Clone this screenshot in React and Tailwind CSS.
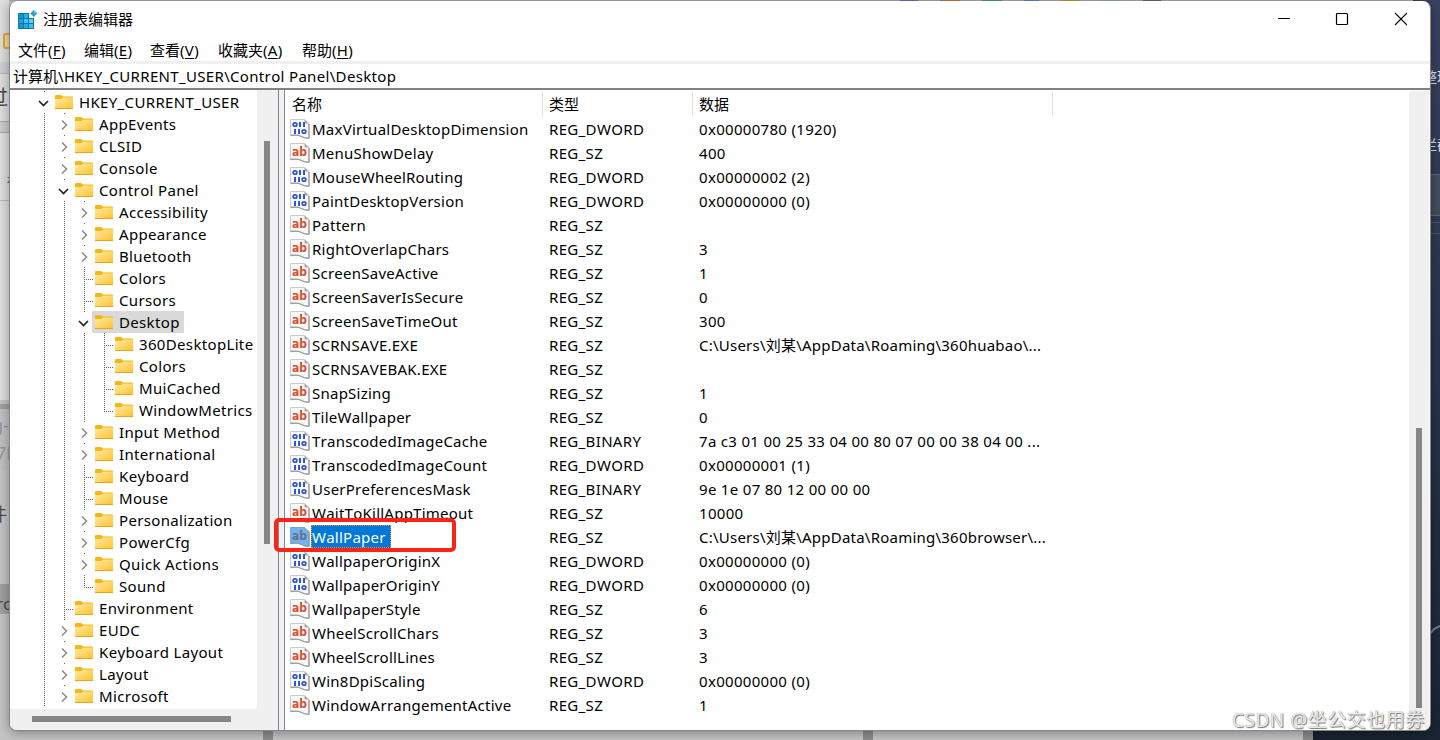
import React from 'react';

const MENU = [
  { label: '文件', hotkey: 'F', width: 'w-[66px]' },
  { label: '编辑', hotkey: 'E', width: 'w-[66px]' },
  { label: '查看', hotkey: 'V', width: 'w-[68px]' },
  { label: '收藏夹', hotkey: 'A', width: 'w-[84px]' },
  { label: '帮助', hotkey: 'H', width: 'w-[66px]' },
];

// cells: one letter per indent column
// '|' guide line, '>' collapsed, 'v' expanded, '+' leaf branch, 'L' last leaf
const TREE = [
  { cells: 'v', name: 'HKEY_CURRENT_USER' },
  { cells: '|>', name: 'AppEvents' },
  { cells: '|>', name: 'CLSID' },
  { cells: '|>', name: 'Console' },
  { cells: '|v', name: 'Control Panel' },
  { cells: '||>', name: 'Accessibility' },
  { cells: '||>', name: 'Appearance' },
  { cells: '||>', name: 'Bluetooth' },
  { cells: '||+', name: 'Colors' },
  { cells: '||+', name: 'Cursors' },
  { cells: '||v', name: 'Desktop', selected: true },
  { cells: '|||+', name: '360DesktopLite' },
  { cells: '|||+', name: 'Colors' },
  { cells: '|||+', name: 'MuiCached' },
  { cells: '|||L', name: 'WindowMetrics' },
  { cells: '||>', name: 'Input Method' },
  { cells: '||>', name: 'International' },
  { cells: '||+', name: 'Keyboard' },
  { cells: '||+', name: 'Mouse' },
  { cells: '||>', name: 'Personalization' },
  { cells: '||>', name: 'PowerCfg' },
  { cells: '||>', name: 'Quick Actions' },
  { cells: '||L', name: 'Sound' },
  { cells: '|+', name: 'Environment' },
  { cells: '|>', name: 'EUDC' },
  { cells: '|>', name: 'Keyboard Layout' },
  { cells: '|>', name: 'Layout' },
  { cells: '|>', name: 'Microsoft' },
];

const VALUES = [
  ['MaxVirtualDesktopDimension', 'REG_DWORD', '0x00000780 (1920)'],
  ['MenuShowDelay', 'REG_SZ', '400'],
  ['MouseWheelRouting', 'REG_DWORD', '0x00000002 (2)'],
  ['PaintDesktopVersion', 'REG_DWORD', '0x00000000 (0)'],
  ['Pattern', 'REG_SZ', ''],
  ['RightOverlapChars', 'REG_SZ', '3'],
  ['ScreenSaveActive', 'REG_SZ', '1'],
  ['ScreenSaverIsSecure', 'REG_SZ', '0'],
  ['ScreenSaveTimeOut', 'REG_SZ', '300'],
  ['SCRNSAVE.EXE', 'REG_SZ', 'C:\\Users\\刘某\\AppData\\Roaming\\360huabao\\...'],
  ['SCRNSAVEBAK.EXE', 'REG_SZ', ''],
  ['SnapSizing', 'REG_SZ', '1'],
  ['TileWallpaper', 'REG_SZ', '0'],
  ['TranscodedImageCache', 'REG_BINARY', '7a c3 01 00 25 33 04 00 80 07 00 00 38 04 00 ...'],
  ['TranscodedImageCount', 'REG_DWORD', '0x00000001 (1)'],
  ['UserPreferencesMask', 'REG_BINARY', '9e 1e 07 80 12 00 00 00'],
  ['WaitToKillAppTimeout', 'REG_SZ', '10000'],
  ['WallPaper', 'REG_SZ', 'C:\\Users\\刘某\\AppData\\Roaming\\360browser\\...'],
  ['WallpaperOriginX', 'REG_DWORD', '0x00000000 (0)'],
  ['WallpaperOriginY', 'REG_DWORD', '0x00000000 (0)'],
  ['WallpaperStyle', 'REG_SZ', '6'],
  ['WheelScrollChars', 'REG_SZ', '3'],
  ['WheelScrollLines', 'REG_SZ', '3'],
  ['Win8DpiScaling', 'REG_DWORD', '0x00000000 (0)'],
  ['WindowArrangementActive', 'REG_SZ', '1'],
];

const SELECTED = 'WallPaper';

const RegeditIcon = () => (
  <svg width="20" height="20" viewBox="0 0 20 20">
    <path d="M0 3h11v5h5v11H0z" fill="#0c79b0" />
    <g fill="#1593cc">
      <rect x="1" y="4" width="4" height="4" />
      <rect x="6" y="4" width="4" height="4" fill="#2fb0e2" />
      <rect x="1" y="9" width="4" height="4" fill="#1fa3d9" />
      <rect x="6" y="9" width="4" height="4" fill="#46c3ef" />
      <rect x="11" y="9" width="4" height="4" fill="#5ccdf3" />
      <rect x="1" y="14" width="4" height="4" />
      <rect x="6" y="14" width="4" height="4" fill="#2aa9de" />
      <rect x="11" y="14" width="4" height="4" fill="#3fbbe9" />
    </g>
    <path d="M15.6 0l3.6 3.3-3.3 3.6-3.6-3.3z" fill="#2d9bc8" />
    <path d="M15.6 0l3.6 3.3-3.4.3z" fill="#5cc0e2" />
  </svg>
);

const FolderIcon = () => (
  <svg width="18" height="14" viewBox="0 0 18 14" className="shrink-0">
    <defs>
      <linearGradient id="folder" x1="0" y1="0" x2="1" y2="1">
        <stop offset="0" stopColor="#ffeaa8" />
        <stop offset="1" stopColor="#fdc52f" />
      </linearGradient>
    </defs>
    <path d="M0 1a1 1 0 0 1 1-1h5l2 1.6H17a1 1 0 0 1 1 1V6H0z" fill="#f8b616" />
    <path d="M0 4h6.5L8 2.5h10V13H0z" fill="url(#folder)" />
    <path d="M0 13h18v1H0z" fill="#e9a51c" />
  </svg>
);

const TreeCell = ({ kind }) => (
  <svg width="20" height="22" viewBox="0 0 20 22" className="shrink-0">
    {(kind === '|' || kind === '+') && (
      <path d="M10.5 0V22" stroke="#606060" strokeDasharray="1 1" />
    )}
    {kind === 'L' && <path d="M10.5 0V13" stroke="#606060" strokeDasharray="1 1" />}
    {(kind === '+' || kind === 'L') && (
      <path d="M12 12.5H19" stroke="#606060" strokeDasharray="1 1" />
    )}
    {(kind === '>' || kind === 'v') && <path d="M10 0.5h1" stroke="#606060" />}
    {kind === '>' && (
      <path d="M8 7.5L12.5 12 8 16.5" fill="none" stroke="#8a8a8a" strokeWidth="1.5" />
    )}
    {kind === 'v' && (
      <path d="M5 10L9.5 14.5 14 10" fill="none" stroke="#222" strokeWidth="1.7" />
    )}
  </svg>
);

const TreeRow = ({ cells, name, selected }) => (
  <div className="flex h-[22px] items-center pl-6">
    {cells.split('').map((kind, i) => (
      <TreeCell key={i} kind={kind} />
    ))}
    <div
      className={`-ml-[2px] flex h-[22px] items-center gap-1.5 rounded-[1px] pl-[3px] pr-1 ${
        selected ? 'bg-[#d9d9d9]' : ''
      }`}
    >
      <FolderIcon />
      <span className="leading-[21px] tracking-[0.34px] whitespace-nowrap">{name}</span>
    </div>
  </div>
);

const ValueIcon = ({ text, selected }) => (
  <svg width="20" height="20" viewBox="0 0 20 20" className="shrink-0">
    <path
      d="M.5.5h14l4.5 4v14.5c-3 .6-5-.2-7.5-1.6S5.5 15.5.5 16.5z"
      fill={selected ? '#6fb4ea' : '#f7f8f9'}
      stroke={selected ? '#6fa9dc' : '#c9cbcd'}
    />
    <path
      d="M.5 16.5c5-1 8.500-.3 11 1s4.500 2.200 7.500 1.500V5"
      fill="none"
      stroke={selected ? '#8b9cae' : '#9b9b9b'}
      strokeWidth="1.3"
    />
    <path d="M14.5.5v4H19z" fill={selected ? '#93a9bd' : '#a9a9a9'} />
    {text ? (
      <text
        x="9.5"
        y="12.5"
        textAnchor="middle"
        fontFamily="DejaVu Sans"
        fontWeight="bold"
        fontSize="12"
        textLength="15"
        lengthAdjust="spacingAndGlyphs"
        fill={selected ? '#6b6c92' : '#d9512c'}
      >
        ab
      </text>
    ) : (
      <g fill="#3457d5">
        <ellipse cx="5" cy="5.5" rx="1.900" ry="1.700" fill="none" stroke="#3457d5" strokeWidth="1.700" />
        <rect x="9" y="3" width="2" height="5" />
        <rect x="13" y="3" width="2" height="5" />
        <rect x="4" y="10" width="2" height="5" />
        <rect x="8" y="10" width="2" height="5" />
        <ellipse cx="14" cy="12.5" rx="1.900" ry="1.700" fill="none" stroke="#3457d5" strokeWidth="1.700" />
      </g>
    )}
  </svg>
);

const ValueRow = ({ name, type, data }) => {
  const selected = name === SELECTED;
  return (
    <div className="flex h-6">
      <div className="flex w-[259px] pl-[5px]">
        <div className="pt-[2px]">
          <ValueIcon text={type === 'REG_SZ'} selected={selected} />
        </div>
        <span
          className={`ml-px h-[23px] border border-dotted pr-1 leading-[22px] tracking-[0.24px] whitespace-nowrap ${
            selected ? 'border-[#ff8728] bg-[#0078d7] text-white' : 'border-transparent'
          }`}
        >
          {name}
        </span>
      </div>
      <div className="w-[150px] pl-[5px] leading-6 tracking-[0.34px]">{type}</div>
      <div
        className={`pl-[5px] leading-6 whitespace-nowrap ${
          data.startsWith('C:') ? 'tracking-[0.23px]' : 'tracking-[0.31px]'
        }`}
      >
        {data}
      </div>
    </div>
  );
};

// Whatever shows around the edges of the window
const Desktop = () => (
  <div className="absolute inset-0 bg-[#c4c4c4] text-[#4a4a4a]">
    <div className="absolute top-0 left-0 h-px w-full bg-[#aaa7a8]" />
    <div className="absolute top-0 left-0 h-[400px] w-[9px] bg-[#dedede]" />
    <div className="absolute top-[33px] left-[3px] h-4 w-4 rounded-[2px] border-2 border-[#e0a93a] bg-[#f4dc9a]" />
    <div className="absolute top-[62px] left-0 h-3 w-[9px] border-b border-[#b5b5b5] bg-[#d0d0d0]" />
    <span className="absolute top-[86px] left-[-12px] text-[20px] leading-6">过</span>
    <div className="absolute top-[121px] left-0 h-3 w-[9px] border-y border-[#aaa] bg-[#cdcdcd]" />
    <span className="absolute top-[174px] left-[7px] text-xs leading-4">在</span>
    <div className="absolute top-[200px] left-0 h-px w-[9px] bg-[#bdbdbd]" />
    <div className="absolute top-[404px] left-0 h-[65px] w-[9px] border-t-[5px] border-[#a2a2a2] bg-[#c1c1c1]" />
    <span className="absolute top-[413px] left-[-8px] text-[18px] leading-6 text-[#9a94a4]">g-</span>
    <span className="absolute top-[441px] left-[-4px] text-[18px] leading-6 text-[#9f9898]">7E</span>
    <span className="absolute top-[502px] left-[-11px] text-[18px] leading-6">件</span>
    <div className="absolute top-[584px] left-0 h-[30px] w-[9px] bg-[#a1a1a1]" />
    <span className="absolute top-[592px] left-[-4px] text-[17px] leading-6">rc</span>
    <div className="absolute top-0 left-[900px] flex h-px gap-[22px]">
      <i className="w-[18px] bg-[#8064b8]" />
      <i className="w-5 bg-[#c47848]" />
      <i className="w-5 bg-[#4a9a70]" />
      <i className="w-[15px] bg-[#5c87c4]" />
      <i className="w-[18px] bg-[#c0943a]" />
      <i className="w-5 bg-[#90a4b8]" />
      <i className="w-[18px] bg-[#666]" />
    </div>
    <div className="absolute bottom-0 left-[263px] h-3 w-[10px] bg-[#8e8e8e]" />
    <div className="absolute bottom-0 left-[863px] h-3 w-[10px] bg-[#8e8e8e]" />
    <div className="absolute bottom-0 left-[1303px] h-3 w-[10px] bg-[#8b8b8b]" />
    <div className="absolute right-0 bottom-0 h-3 w-[127px] bg-[#1a2331]" />
    <div className="absolute top-0 right-0 h-full w-[27px] bg-linear-to-b from-[#3a4260] via-[#27344b] to-[#1b2534]" />
    <span className="absolute top-[68px] left-[1423px] text-[14px] leading-[18px] whitespace-nowrap text-[#dfe3ea]">整理</span>
    <span className="absolute top-[136px] left-[1423px] text-[14px] leading-[18px] whitespace-nowrap text-[#dfe3ea]">拦截</span>
    <div className="absolute top-[174px] right-0 h-[42px] w-[10px] border-y border-[#5f6976] bg-[#434d5c]" />
    <div className="absolute top-[222px] right-0 h-[12px] w-[10px] border-y border-[#4a5566] bg-[#303c50]" />
    <svg className="absolute top-[622px] right-0" width="10" height="16" viewBox="0 0 10 16">
      <path d="M0 12l4-5 6-3" fill="none" stroke="#75808e" strokeWidth="2" />
    </svg>
  </div>
);

const TitleBar = () => (
  <div className="flex h-[37px] shrink-0 items-center justify-between pr-[23px] pl-2">
    <div className="flex items-center gap-[5px]">
      <RegeditIcon />
      <span className="leading-[21px]">注册表编辑器</span>
    </div>
    <svg width="130" height="14" viewBox="0 0 130 14" fill="none" stroke="#000" className="-mt-px">
      <path d="M1 6.5h12" />
      <rect x="59.5" y="1.5" width="11" height="11" rx="1" strokeWidth="1.2" />
      <path d="M118 1l12 12M130 1l-12 12" strokeWidth="1.1" />
    </svg>
  </div>
);

const Tree = () => (
  <div className="flex w-[269px] shrink-0 flex-col border-r border-[#828790] bg-[#f0f0f0]">
    <div className="flex h-[619px]">
      <div className="w-[247px] shrink-0 overflow-hidden rounded-br-[3px] bg-white pt-px">
        {TREE.map((row, i) => (
          <TreeRow key={i} {...row} />
        ))}
      </div>
      <div className="pt-[51px] pl-[7px]">
        <div className="h-[403px] w-1.5 bg-[#868686]" />
      </div>
    </div>
    <div className="pt-[7px] pl-[22px]">
      <div className="h-1.5 w-[199px] bg-[#868686]" />
    </div>
  </div>
);

const ValueList = () => (
  <div className="flex flex-1 border-l border-[#828790] bg-white">
    <div className="flex-1">
      <div className="flex h-[27px] pt-px leading-[27px]">
        <div className="w-[258px] border-r border-[#e5e5e5] pl-[7px]">名称</div>
        <div className="w-[150px] border-r border-[#e5e5e5] pl-1.5">类型</div>
        <div className="w-[360px] border-r border-[#e5e5e5] pl-1.5">数据</div>
      </div>
      {VALUES.map(([name, type, data]) => (
        <ValueRow key={name} name={name} type={type} data={data} />
      ))}
    </div>
    <div className="mt-px mr-px w-5 bg-[#f0f0f0] pt-[337px] pl-[7px]">
      <div className="h-[280px] w-1.5 bg-[#868686]" />
    </div>
  </div>
);

export default function App() {
  return (
    <div className="relative h-[740px] w-[1440px] overflow-hidden font-['Noto_Sans','Noto_Sans_CJK_SC',sans-serif] text-[15px] text-black [font-kerning:none]">
      <Desktop />
      <div className="absolute top-px left-[9px] flex h-[730px] w-[1422px] flex-col overflow-hidden rounded-lg border-x border-b border-[#85858d] bg-white shadow-[0_2px_12px_rgba(0,0,0,0.35)]">
        <TitleBar />
        <div className="flex h-[23px] shrink-0 items-center pl-2 leading-[22px]">
          {MENU.map(({ label, hotkey, width }) => (
            <div key={hotkey} className={`${width} whitespace-nowrap`}>
              {label}
              <span className="tracking-[0.3px]">
                (<u className="underline-offset-2">{hotkey}</u>)
              </span>
            </div>
          ))}
        </div>
        <div className="h-[3px] shrink-0 bg-[#f0f0f0]" />
        <div className="h-6 shrink-0 pl-[3px] leading-6 tracking-[0.33px]">
          <span className="tracking-normal">计算机</span>\HKEY_CURRENT_USER\Control Panel\Desktop
        </div>
        <div className="flex flex-1 gap-[5px] border-t-2 border-[#828087] bg-[#f0f0f0]">
          <Tree />
          <ValueList />
        </div>
      </div>
      <div className="absolute top-[518px] left-[274px] h-[34px] w-[182px] rounded-[5px] border-4 border-[#fb2418]" />
      <div className="absolute top-[708px] left-[1232px] text-[19px] leading-6 tracking-[0.5px] whitespace-nowrap text-[#e8e8e8] [text-shadow:1px_1px_1px_#777,0_0_1px_#999]">
        CSDN @坐公交也用券
      </div>
    </div>
  );
}
